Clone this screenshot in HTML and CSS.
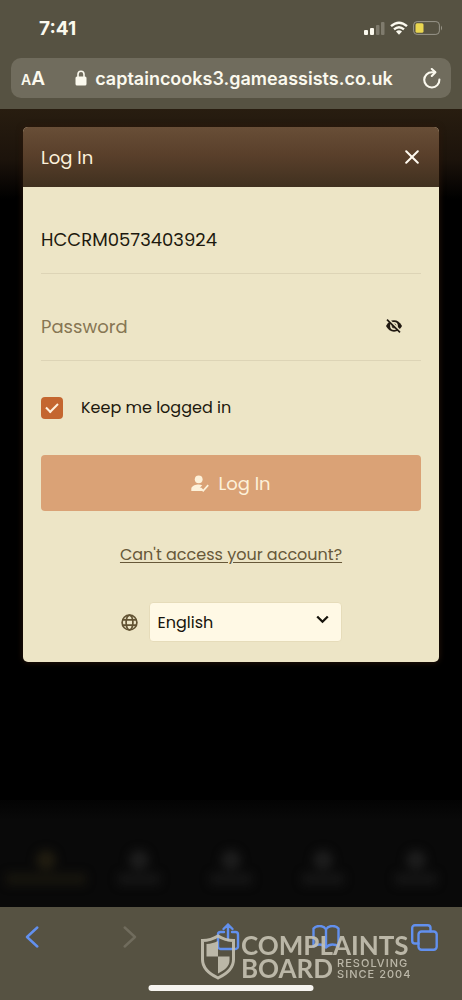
FILE: index.html
```html
<!DOCTYPE html>
<html lang="en">
<head>
<meta charset="utf-8">
<meta name="viewport" content="width=device-width, initial-scale=1">
<title>Log In</title>
<link rel="stylesheet" href="styles.css">
</head>
<body>
<header class="browser-top">
  <div class="status">
    <span class="time">7:41</span>
    <div class="status-icons">
      <svg width="21" height="14" viewBox="0 0 21 14" fill="#fbf9ee"><rect x="0" y="9" width="4" height="5" rx="1"/><rect x="6" y="7" width="4" height="7" rx="1"/><rect x="12" y="4" width="3.5" height="10" rx="1" opacity=".25"/><rect x="17" y="1" width="3.5" height="13" rx="1" opacity=".25"/></svg>
      <svg width="18" height="14" viewBox="0 0 18 14"><g fill="none" stroke="#fbf9ee" stroke-width="2.4"><path d="M1 5.2Q9-1.9 17 5.2"/><path d="M4 8.4Q9 4 14 8.4"/></g><path d="M6 10.5Q9 8.2 12 10.5L9 13.7z" fill="#fbf9ee"/></svg>
      <svg width="30" height="14" viewBox="0 0 30 14"><rect x=".6" y=".6" width="25.8" height="12.8" rx="3.5" fill="none" stroke="#99968a"/><rect x="2.5" y="2.2" width="8" height="9.6" rx="1.5" fill="#ead750"/><path d="M28 4.5Q30 7 28 9.5z" fill="#99968a"/></svg>
    </div>
  </div>
  <div class="address">
    <button class="text-size" aria-label="Page settings"><small>A</small>A</button>
    <div class="site">
      <svg width="12" height="16" viewBox="0 0 12 16"><path d="M3 7V4.3a3 3 0 0 1 6 0V7" fill="none" stroke="#fbf9ee" stroke-width="1.6"/><rect x=".5" y="6.6" width="11" height="8.9" rx="1.5" fill="#fbf9ee"/></svg>
      <span>captaincooks3.gameassists.co.uk</span>
    </div>
    <button class="reload" aria-label="Reload"><svg width="18" height="21" viewBox="0 0 18 21" fill="none" stroke="#fbf9ee" stroke-width="2.1" stroke-linecap="round" stroke-linejoin="round"><path d="M16.4 11.6A7.6 7.6 0 1 1 9 4.300h3"/><path d="M8.800 1l3.600 3.300-3.600 3.600"/></svg></button>
  </div>
</header>

<main class="page">
  <section class="card">
    <div class="card-head">
      <h1>Log In</h1>
      <button aria-label="Close"><svg width="14" height="14" viewBox="0 0 14 14" stroke="#fffaf0" stroke-width="2" stroke-linecap="round"><path d="M1.200 1.200l11.600 11.600M12.800 1.200L1.200 12.800"/></svg></button>
    </div>
    <form class="card-body">
      <div class="field">
        <input type="text" aria-label="Account number" value="HCCRM0573403924">
      </div>
      <div class="field">
        <input type="password" aria-label="Password" placeholder="Password">
        <button type="button" aria-label="Show password"><svg width="18" height="14" viewBox="0 0 18 14"><path d="M1 7Q4 1.300 9 1.300T17 7Q14 12.700 9 12.700T1 7z" fill="#211a12"/><circle cx="9" cy="7" r="3.900" fill="#ede5c6"/><circle cx="9" cy="7" r="2.400" fill="#4b4133"/><path d="M3.300.2l12.900 12.500" stroke="#ede5c6" stroke-width="2"/><path d="M2 .7l13 12.600" stroke="#211a12" stroke-width="1.700"/></svg></button>
      </div>
      <label class="keep"><input type="checkbox" checked><span>Keep me logged in</span></label>
      <button type="submit" class="submit"><svg width="18" height="17" viewBox="0 0 18 17" fill="#fdf1d9"><circle cx="7.700" cy="4.300" r="3.900"/><path d="M.3 16v-2.200c0-2.700 4.400-4.200 7.400-4.200 1.200 0 2.500.2 3.600.6l-2.500 2.500 3.300 3.300z"/><path d="M9.200 12.800l3 2.900 5-5.600" fill="none" stroke="#fdf1d9" stroke-width="1.700"/></svg><span>Log In</span></button>
      <a class="help" href="#">Can't access your account?</a>
      <div class="language">
        <svg width="17" height="17" viewBox="0 0 17 17" fill="none" stroke="#625333" stroke-width="1.700"><circle cx="8.500" cy="8.500" r="7.400"/><ellipse cx="8.500" cy="8.500" rx="3.400" ry="7.400"/><path d="M1.600 5.900h13.800M1.600 11.100h13.800"/></svg>
        <div class="select-wrap">
          <select aria-label="Language"><option>English</option></select>
          <svg class="chevron" width="13" height="9" viewBox="0 0 13 9" fill="none" stroke="#17140c" stroke-width="2.300"><path d="M1.200 1.500l5.300 5.200 5.300-5.200"/></svg>
        </div>
      </div>
    </form>
  </section>
  <div class="dimmed-tabs" aria-hidden="true"><i></i><i></i><i></i><i></i><i></i></div>
</main>

<footer class="browser-bottom">
  <nav class="toolbar">
    <button aria-label="Back"><svg width="14" height="22" viewBox="0 0 14 22"><path d="M12.300 1.500L2 11l10.300 9.500"/></svg></button>
    <button aria-label="Forward" disabled><svg width="14" height="22" viewBox="0 0 14 22"><path d="M1.700 1.500L12 11 1.700 20.500"/></svg></button>
    <button aria-label="Share"><svg width="24" height="28" viewBox="0 0 24 28"><path d="M8 9H4.500A2.500 2.500 0 0 0 2 11.500v12A2.500 2.500 0 0 0 4.500 26h15a2.500 2.500 0 0 0 2.500-2.500v-12A2.500 2.500 0 0 0 19.500 9H16M12 17V1.500M7.500 6L12 1.500 16.500 6"/></svg></button>
    <button aria-label="Bookmarks"><svg width="28" height="24" viewBox="0 0 28 24"><path d="M14 4.500C12.500 1.800 10 1 7.500 1S3 1.800 1.500 3.500v18C3 20.200 5 19.500 7.500 19.500s4.500.8 6.500 3zM14 4.500C15.500 1.800 18 1 20.500 1s4.500.8 6 2.500v18c-1.500-1.300-3.500-2-6-2s-4.500.8-6.500 3"/></svg></button>
    <button aria-label="Tabs"><svg width="27" height="27" viewBox="0 0 27 27"><path d="M7.500 19.500H4A2.800 2.800 0 0 1 1.200 16.700V4A2.800 2.800 0 0 1 4 1.200h12.700A2.800 2.800 0 0 1 19.500 4v3.300"/><rect x="7.500" y="7.500" width="18.200" height="18.200" rx="3"/></svg></button>
  </nav>
  <div class="watermark">
    <svg width="36" height="46" viewBox="0 0 36 46"><path d="M18 2c5 3.200 10 4.500 15.500 4.500v19C33.500 34.500 26.500 40 18 44 9.500 40 2.500 34.500 2.500 25.500v-19C8 6.500 13 5.200 18 2z" fill="none" stroke="#c6c2b3" stroke-width="3"/><path d="M18 7v15.500H6.500V10C11 9.800 14.500 8.800 18 7zM18 22.500h11.500v4C29.500 32.500 24 36.500 18 39.500z" fill="#c6c2b3"/></svg>
    <div class="brand">
      <span>COMPLAINTS</span>
      <div class="brand-row"><span>BOARD</span><small>RESOLVING<br>SINCE 2004</small></div>
    </div>
  </div>
  <div class="home-bar"></div>
</footer>
</body>
</html>
```
FILE: styles.css
```css
* { box-sizing: border-box; }

body {
  margin: 0;
  min-height: 100vh;
  display: flex;
  flex-direction: column;
  background: #000;
  font-family: Poppins, Inter, "Liberation Sans", sans-serif;
  font-size: 16px;
}

button {
  padding: 0;
  border: 0;
  background: none;
  font: inherit;
  color: inherit;
}

svg { display: block; flex: none; }

.browser-top {
  padding: 16px 11px 11px;
  background: #565242;
  color: #fbf9ee;
  font-family: Inter, "Liberation Sans", sans-serif;
}

.status {
  display: flex;
  justify-content: space-between;
  align-items: center;
  height: 24px;
  padding: 0 8px 0 28px;
}

.time { font-size: 19px; font-weight: 700; }

.status-icons { display: flex; gap: 5px; }

.address {
  display: flex;
  justify-content: space-between;
  align-items: center;
  height: 40px;
  margin-top: 18px;
  padding: 0 10px;
  border-radius: 10px;
  background: #706c5d;
}

.text-size { font-size: 19px; font-weight: 600; }
.text-size small { font-size: 14px; }

.site {
  display: flex;
  align-items: center;
  gap: 8px;
  font-size: 18px;
  font-weight: 600;
}

.page {
  flex: 1;
  display: flex;
  flex-direction: column;
  justify-content: space-between;
  padding-top: 18px;
  background: linear-gradient(#281d10, #1c130b 50px, #000 90px);
}

.card {
  margin: 0 23px;
  border-radius: 5px;
  overflow: hidden;
  background: #ede5c6;
  box-shadow: 0 0 6px #2d180b;
}

.card-head {
  display: flex;
  justify-content: space-between;
  align-items: center;
  height: 60px;
  padding: 0 20px 0 18px;
  background: linear-gradient(#684e37, #5a402b 45%, #40301f);
  color: #fdf1dc;
}

.card-head h1 { margin: 0; font-size: 18px; font-weight: 400; }

.card-body {
  display: flex;
  flex-direction: column;
  padding: 0 18px 20px;
  color: #1d190e;
}

.field {
  display: flex;
  align-items: center;
  height: 87px;
  padding: 18px 18px 0 0;
  border-bottom: 1px solid #ddd4b6;
}

.field input {
  flex: 1;
  min-width: 0;
  padding: 0;
  border: 0;
  outline: 0;
  background: none;
  color: #1d190e;
  font: inherit;
  font-size: 18px;
}

.field input::placeholder { color: #877653; opacity: 1; }

.keep {
  display: flex;
  align-items: center;
  gap: 18px;
  margin: 36px 0;
  line-height: 22px;
}

.keep input {
  appearance: none;
  width: 22px;
  height: 22px;
  margin: 0;
  border-radius: 4px;
  background: #c4662f;
  display: grid;
  place-items: center;
}

.keep input:checked::before {
  content: "";
  width: 10px;
  height: 5px;
  margin-bottom: 3px;
  border: solid #fff0dc;
  border-width: 0 0 2px 2px;
  transform: rotate(-45deg);
}

.submit {
  display: flex;
  justify-content: center;
  align-items: center;
  gap: 9px;
  height: 56px;
  border-radius: 4px;
  background: #daa276;
  color: #fdf1d9;
  font-size: 18px;
}

.help {
  align-self: center;
  margin-top: 32px;
  color: #675839;
  line-height: 24px;
  text-underline-offset: 2px;
}

.language {
  display: flex;
  justify-content: center;
  align-items: center;
  gap: 11px;
  margin-top: 35px;
}

.select-wrap { position: relative; width: 193px; }

.select-wrap select {
  appearance: none;
  display: block;
  width: 100%;
  height: 40px;
  padding: 0 8px;
  border: 1px solid #e6dcba;
  border-radius: 4px;
  background: #fff9e5;
  color: #17140c;
  font: inherit;
}

.chevron {
  position: absolute;
  right: 13px;
  top: 13px;
  pointer-events: none;
}

.dimmed-tabs {
  display: flex;
  height: 107px;
  padding-top: 50px;
  background: linear-gradient(#030303, #090909 20px);
}

.dimmed-tabs i {
  flex: 1;
  display: flex;
  flex-direction: column;
  align-items: center;
  gap: 3px;
  color: #1d1d1d;
  filter: blur(5px);
}

.dimmed-tabs i::before {
  content: "";
  width: 20px;
  height: 20px;
  border-radius: 50%;
  background: currentColor;
}

.dimmed-tabs i::after {
  content: "";
  width: 42px;
  height: 12px;
  background: currentColor;
  opacity: .6;
}

.dimmed-tabs i:first-child { color: #201c10; }
.dimmed-tabs i:first-child::after { width: 80px; }

.browser-bottom {
  position: relative;
  height: 93px;
  padding: 16px 23px 0 17px;
  background: #565242;
}

.toolbar { display: flex; justify-content: space-between; align-items: center; }

.toolbar button { display: flex; justify-content: center; width: 30px; }

.toolbar svg {
  fill: none;
  stroke: #6290ee;
  stroke-width: 2.4;
  stroke-linecap: round;
  stroke-linejoin: round;
}

.toolbar button:disabled svg { stroke: #706c5d; }

.watermark {
  position: absolute;
  left: 200px;
  top: 27px;
  display: flex;
  gap: 5px;
  opacity: .9;
  color: #c6c2b3;
  font-family: Lato, sans-serif;
  font-size: 26px;
  font-weight: 700;
  line-height: 23px;
  pointer-events: none;
}

.brand-row { display: flex; align-items: center; gap: 4px; }

.brand small {
  font-family: Inter, sans-serif;
  font-size: 11px;
  font-weight: 500;
  line-height: 11px;
  letter-spacing: 1px;
}

.home-bar {
  position: absolute;
  left: 50%;
  bottom: 9px;
  width: 165px;
  height: 6px;
  border-radius: 3px;
  background: #f6f4f0;
  transform: translateX(-50%);
}
```
